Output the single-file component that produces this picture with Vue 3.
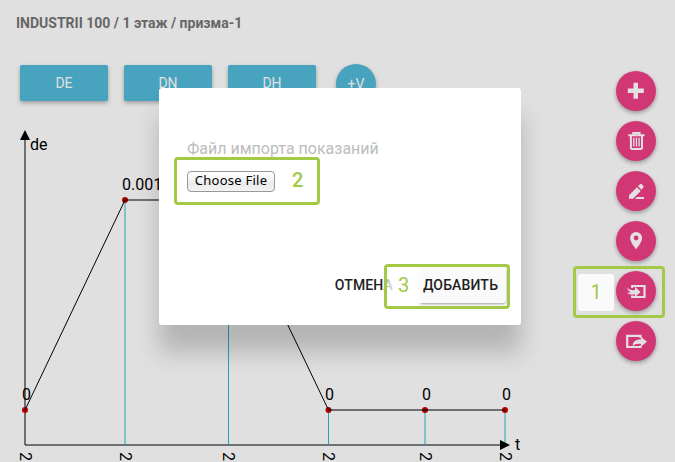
<script setup>
const tabs = ['DE', 'DN', 'DH']

const points = [
  { x: 25, y: 410, label: '0' },
  { x: 125, y: 200, label: '0.001' },
  { x: 228, y: 200, label: '' },
  { x: 328.5, y: 410, label: '0' },
  { x: 425, y: 410, label: '0' },
  { x: 505, y: 410, label: '0' },
]
const labelX = (p) => Math.floor(p.x) - 3
const dropX = (p) => (p.x === 228 ? 228.5 : p.x)
</script>

<template>
  <div class="page">
    <h1 class="crumbs">INDUSTRII 100 / 1 этаж / призма-1</h1>

    <div class="tabs">
      <button v-for="t in tabs" :key="t" class="tab">{{ t }}</button>
      <button class="tab round">+V</button>
    </div>

    <svg class="chart" viewBox="0 120 675 342" width="675" height="342">
      <g class="axis">
        <line x1="25" y1="135" x2="25" y2="445" />
        <line x1="25" y1="445" x2="505" y2="445" />
      </g>
      <g class="drops">
        <line v-for="p in points.slice(1)" :key="p.x" :x1="dropX(p)" :y1="p.y" :x2="dropX(p)" y2="445" />
      </g>
      <circle v-for="p in points" :key="p.x" :cx="p.x" :cy="p.y" r="3" class="dot" />
      <polyline class="axis" :points="points.map((p) => `${p.x},${p.y}`).join(' ')" />
      <path d="M25 130L30 140H20Z" />
      <path d="M510 445L500 440V450Z" />
      <text x="30" y="150">de</text>
      <text x="515" y="450">t</text>
      <text v-for="p in points" :key="p.x" :x="labelX(p)" :y="p.y - 10">{{ p.label }}</text>
      <text v-for="p in points" :key="p.x" :transform="`translate(${Math.floor(p.x) - 5} 452) rotate(90)`">2</text>
    </svg>

    <div class="fabs">
      <button class="fab">
        <svg viewBox="0 0 24 24"><path d="M9.500 3.800h4.500v5.700h5.800v4.500h-5.800v5.700h-4.500v-5.700H3.800v-4.500h5.700z" /></svg>
      </button>
      <button class="fab">
        <svg viewBox="0 0 24 24">
          <path d="M6.900 7V18.500Q6.900 20 8.400 20H16.500Q18 20 18 18.500V7" class="stroke" />
          <path d="M4.300 6.300H20.600M9.300 5.800V4.100H15.600V5.800" class="stroke" />
          <path d="M9.800 8.800V17.500M12.450 8.800V17.500M15.100 8.800V17.500" class="stroke thin" />
        </svg>
      </button>
      <button class="fab">
        <svg viewBox="0 0 24 24">
          <path d="M5 16.200L13 8.200L16.800 12L9 19.800H5zM14 7.200L16.200 5Q16.800 4.400 17.400 5L19.400 7Q20 7.600 19.400 8.200L17.600 10.800zM13 18H20v1.900H11.100z" />
        </svg>
      </button>
      <button class="fab">
        <svg viewBox="0 0 24 24">
          <path fill-rule="evenodd" d="M12.100 3a6 6 0 0 0-6 6C6.100 13.400 12.100 20.200 12.100 20.200S18.100 13.400 18.100 9a6 6 0 0 0-6-6zm0 8.400a2.400 2.400 0 1 1 0-4.800a2.400 2.400 0 0 1 0 4.800z" />
        </svg>
      </button>
      <button class="fab">
        <svg viewBox="0 0 24 24">
          <path d="M8.200 9V7H20.500V18H8.200V16.500" class="stroke bold" />
          <path d="M3 8.800Q5.500 11.800 11 11V7.800L16.500 12.900L11 18V15.500Q4.500 16 3 13.500Q5 14 6.500 13.300Q3.500 11.800 3 8.800z" />
        </svg>
      </button>
      <button class="fab">
        <svg viewBox="0 0 24 24">
          <path d="M16.500 9V6.900H3.200V18H16.500V16.500" class="stroke bold" />
          <path d="M8.500 17Q8.800 10.300 17 10.300V7.700L23 12.700L17 17.500V14.900Q11.500 14.300 8.500 17z" />
        </svg>
      </button>
    </div>

    <div class="dialog">
      <div class="field">Файл импорта показаний</div>
      <button class="file">Choose File</button>
      <div class="actions">
        <button class="action">ОТМЕНА</button>
        <button class="action raised">ДОБАВИТЬ</button>
      </div>
    </div>

    <div class="callout one"><span class="tile">1</span></div>
    <div class="callout two">2</div>
    <div class="callout three"><span class="veil">3</span></div>
  </div>
</template>

<style>
body {
  overflow: hidden;
}
</style>

<style scoped>
.page {
  position: relative;
  box-sizing: border-box;
  width: 675px;
  height: 462px;
  overflow: hidden;
  background: #e0e0e0;
  font-family: Roboto, sans-serif;
}
button {
  font-family: inherit;
  border: 0;
  padding: 0;
}
.crumbs {
  margin: 0;
  padding: 14px 16px 0;
  height: 51px;
  box-sizing: border-box;
  color: #666;
  font-size: 14px;
  line-height: 18px;
  font-weight: 700;
}
.tabs {
  display: flex;
  align-items: flex-start;
  gap: 16px;
  height: 69px;
  box-sizing: border-box;
  padding: 14px 20px 0;
}
.tab {
  width: 88px;
  height: 36px;
  border-radius: 2px;
  background: #48a3be;
  color: #e0e0e0;
  font-size: 14px;
  box-shadow: 0 2px 4px rgba(0, 0, 0, 0.3);
}
.round {
  width: 40px;
  height: 40px;
  margin: -1px 0 0 4px;
  border-radius: 50%;
}
.chart {
  display: block;
  font-size: 16px;
}
.axis {
  stroke: #000;
  stroke-width: 1;
  fill: none;
}
.drops {
  stroke: #23a4be;
  stroke-width: 1;
}
.dot {
  fill: #b00000;
}
.fabs {
  position: absolute;
  top: 71px;
  right: 19px;
  display: flex;
  flex-direction: column;
  gap: 10px;
}
.fab {
  display: flex;
  align-items: center;
  justify-content: center;
  width: 40px;
  height: 40px;
  border-radius: 50%;
  background: #d23775;
  box-shadow: 0 2px 4px rgba(0, 0, 0, 0.32);
}
.fab svg {
  width: 24px;
  height: 24px;
  fill: #e4e0e2;
}
.fab .stroke {
  fill: none;
  stroke: #e4e0e2;
  stroke-width: 2;
}
.fab .bold {
  stroke-width: 2.2;
}
.fab .thin {
  stroke-width: 1.3;
}
.dialog {
  position: absolute;
  left: 159px;
  top: 88px;
  width: 362px;
  height: 237px;
  box-sizing: border-box;
  padding: 50px 15px 22px 28px;
  display: flex;
  flex-direction: column;
  align-items: flex-start;
  border-radius: 3px;
  background: #fff;
  box-shadow: 0 27px 24px rgba(0, 0, 0, 0.2);
}
.field {
  color: #bdbdbd;
  font-size: 16px;
  line-height: 22px;
  white-space: nowrap;
}
.file {
  width: 88px;
  height: 21px;
  margin-top: 11px;
  padding-bottom: 2px;
  box-sizing: border-box;
  border: 1px solid #999;
  border-radius: 4px;
  background: linear-gradient(#fff, #f2f2f2 50%, #e9e9e9 51%, #f3f3f3);
  font-family: 'Noto Sans', sans-serif;
  font-size: 13px;
  letter-spacing: 0.25px;
  line-height: 17px;
  color: #000;
  white-space: nowrap;
}
.actions {
  display: flex;
  align-self: stretch;
  justify-content: flex-end;
  margin-top: auto;
}
.action {
  height: 36px;
  padding: 0 8px;
  background: transparent;
  color: #212121;
  font-size: 14px;
  letter-spacing: 0.15px;
  font-weight: 500;
}
.raised {
  width: 91px;
  margin-left: 14px;
  padding: 0;
  border-radius: 3px;
  background: #fafafa;
  box-shadow: 0 1px 3px rgba(0, 0, 0, 0.4);
}
.callout {
  position: absolute;
  box-sizing: border-box;
  border: 3px solid #a4c947;
  border-radius: 4px;
  color: #a4c947;
  font-size: 20px;
}
.one {
  left: 573px;
  top: 266px;
  width: 92px;
  height: 52px;
  padding: 5px 2px;
}
.tile {
  display: block;
  width: 36px;
  height: 37px;
  line-height: 37px;
  border-radius: 3px;
  background: #fafafa;
  text-align: center;
}
.two {
  left: 174px;
  top: 157px;
  width: 146px;
  height: 48px;
  padding-left: 115px;
  line-height: 41px;
  font-weight: 500;
}
.three {
  left: 384px;
  top: 264px;
  width: 126px;
  height: 45px;
}
.veil {
  display: block;
  box-sizing: border-box;
  width: 34px;
  height: 39px;
  padding-left: 11px;
  line-height: 37px;
  background: linear-gradient(to right, rgba(255, 255, 255, 0.7), #fff 40%, #fff 80%, rgba(255, 255, 255, 0.6));
}
</style>
